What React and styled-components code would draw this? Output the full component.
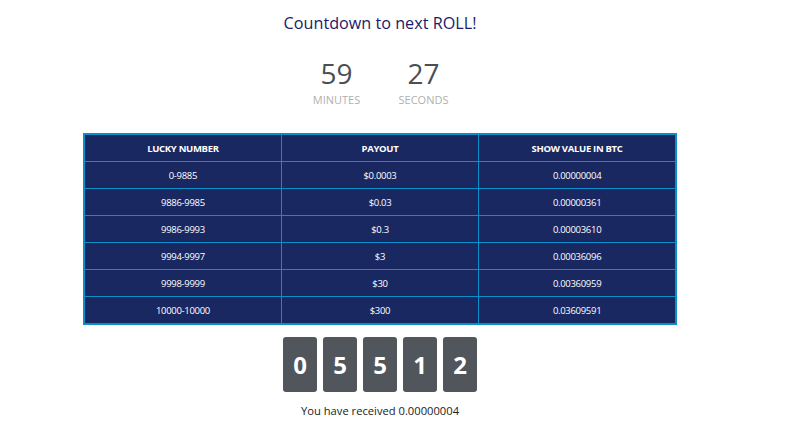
import React from "react";
import styled, { createGlobalStyle } from "styled-components";

const Global = createGlobalStyle`
  html, body { margin: 0; padding: 0; background: #fff; }
  body { font-family: "Open Sans", "Noto Sans", sans-serif; }
`;

const Page = styled.div`
  width: 760px;
  display: flex;
  flex-direction: column;
  align-items: center;
`;

const Title = styled.h2`
  margin: 11px 0 0;
  font-size: 16.2px;
  font-weight: 400;
  color: #1b1a6b;
  line-height: 24px;
`;

const Timer = styled.div`
  display: flex;
  gap: 7px;
  margin-top: 21px;
`;

const Unit = styled.div`
  width: 80px;
  display: flex;
  flex-direction: column;
  align-items: center;
`;

const Num = styled.div`
  font-size: 28px;
  line-height: 34px;
  color: #4a4f55;
`;

const Label = styled.div`
  font-size: 11px;
  line-height: 14px;
  margin-top: 3px;
  color: #b0b0b0;
  text-transform: uppercase;
`;

const Table = styled.table`
  margin-top: 26px;
  width: 594px;
  border-collapse: collapse;
  border: 2px solid #0b8fcb;
  background: #1a2862;
  color: #fff;
  font-size: 9.5px;
  letter-spacing: -0.3px;
`;

const Th = styled.th`
  height: 26px;
  padding: 0;
  border: 1px solid #0b8fcb;
  font-weight: 700;
  text-align: center;
  width: 33.33%;
`;

const Td = styled.td`
  height: 26px;
  padding: 0;
  border: 1px solid #0b8fcb;
  text-align: center;
`;

const Digits = styled.div`
  display: flex;
  gap: 6px;
  margin-top: 12px;
`;

const Digit = styled.div`
  width: 34px;
  height: 55px;
  border-radius: 3px;
  background: #50565b;
  color: #fff;
  font-size: 24px;
  font-weight: 700;
  display: flex;
  align-items: center;
  justify-content: center;
`;

const Received = styled.div`
  margin-top: 11px;
  font-size: 11.2px;
  color: #222;
`;

const rows = [
  ["0-9885", "$0.0003", "0.00000004"],
  ["9886-9985", "$0.03", "0.00000361"],
  ["9986-9993", "$0.3", "0.00003610"],
  ["9994-9997", "$3", "0.00036096"],
  ["9998-9999", "$30", "0.00360959"],
  ["10000-10000", "$300", "0.03609591"],
];

export default function App() {
  return (
    <>
      <Global />
      <Page>
        <Title>Countdown to next ROLL!</Title>
        <Timer>
          <Unit>
            <Num>59</Num>
            <Label>Minutes</Label>
          </Unit>
          <Unit>
            <Num>27</Num>
            <Label>Seconds</Label>
          </Unit>
        </Timer>
        <Table>
          <thead>
            <tr>
              <Th>LUCKY NUMBER</Th>
              <Th>PAYOUT</Th>
              <Th>SHOW VALUE IN BTC</Th>
            </tr>
          </thead>
          <tbody>
            {rows.map((r) => (
              <tr key={r[0]}>
                {r.map((c, i) => (
                  <Td key={i}>{c}</Td>
                ))}
              </tr>
            ))}
          </tbody>
        </Table>
        <Digits>
          {["0", "5", "5", "1", "2"].map((d, i) => (
            <Digit key={i}>{d}</Digit>
          ))}
        </Digits>
        <Received>You have received 0.00000004</Received>
      </Page>
    </>
  );
}
